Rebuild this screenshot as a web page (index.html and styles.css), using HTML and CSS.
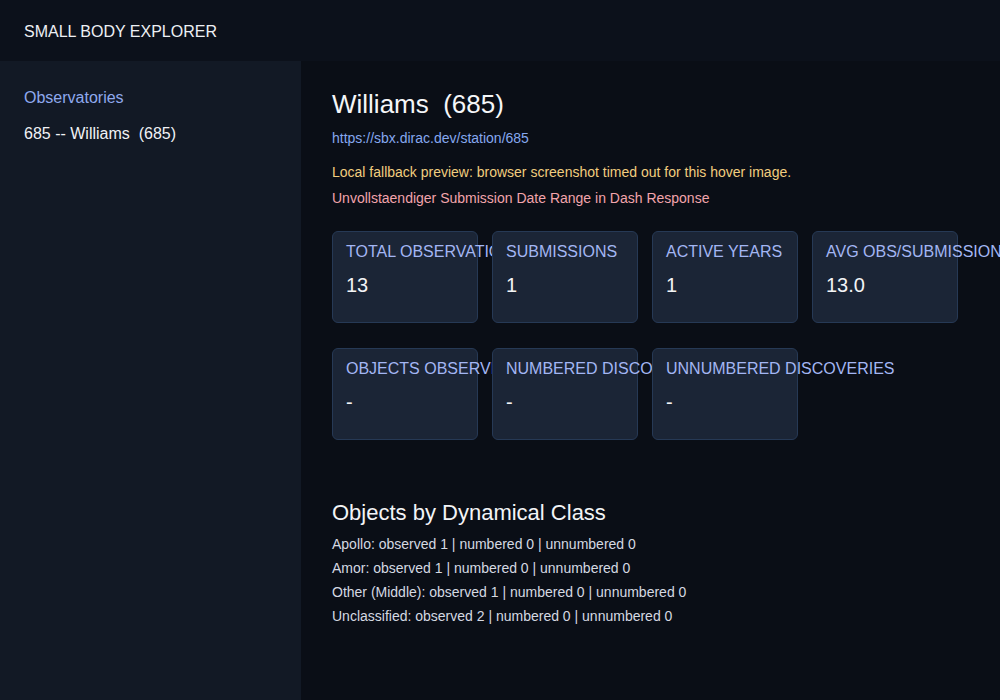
FILE: index.html
```html
<!DOCTYPE html>
<html lang="en">
<head>
    <meta charset="UTF-8">
    <meta name="viewport" content="width=device-width, initial-scale=1.0">
    <title>Small Body Explorer</title>
    <link rel="stylesheet" href="styles.css">
</head>
<body>
    <div class="header">
        <span class="brand">SMALL BODY EXPLORER</span>
    </div>

    <div class="layout">
        <div class="sidebar">
            <div class="side-title">Observatories</div>
            <div class="side-item">685 -- Williams  (685)</div>
        </div>

        <div class="main">
            <h1 class="station-name">Williams  (685)</h1>
            <a class="station-link" href="#">https://sbx.dirac.dev/station/685</a>
            <p class="notice">Local fallback preview: browser screenshot timed out for this hover image.</p>
            <p class="error">Unvollstaendiger Submission Date Range in Dash Response</p>

            <div class="cards">
                <div class="card"><div class="card-label">Total Observations</div><div class="card-value">13</div></div>
                <div class="card"><div class="card-label">Submissions</div><div class="card-value">1</div></div>
                <div class="card"><div class="card-label">Active Years</div><div class="card-value">1</div></div>
                <div class="card"><div class="card-label">Avg Obs/Submission</div><div class="card-value">13.0</div></div>
            </div>
            <div class="cards">
                <div class="card"><div class="card-label">Objects Observed</div><div class="card-value">-</div></div>
                <div class="card"><div class="card-label">Numbered Discoveries</div><div class="card-value">-</div></div>
                <div class="card"><div class="card-label">Unnumbered Discoveries</div><div class="card-value">-</div></div>
            </div>

            <h2 class="section-title">Objects by Dynamical Class</h2>
            <div class="class-list">
                <div>Apollo: observed 1 | numbered 0 | unnumbered 0</div>
                <div>Amor: observed 1 | numbered 0 | unnumbered 0</div>
                <div>Other (Middle): observed 1 | numbered 0 | unnumbered 0</div>
                <div>Unclassified: observed 2 | numbered 0 | unnumbered 0</div>
            </div>
        </div>
    </div>
</body>
</html>
```

FILE: styles.css
```css
body {
    margin: 0;
    font-family: "Liberation Sans", Arial, sans-serif;
    background-color: #0a0e16;
    color: #e6e9ef;
    overflow: hidden;
}
.header {
    height: 61px;
    background-color: #0c111b;
    padding: 0 24px;
    display: flex;
    align-items: center;
    box-sizing: border-box;
}
.brand {
    font-size: 16px;
    color: #eef0f4;
    padding-top: 2px;
}
.layout {
    display: flex;
    height: 639px;
}
.sidebar {
    width: 301px;
    background-color: #121925;
    padding: 28px 24px;
    box-sizing: border-box;
}
.side-title {
    font-size: 16px;
    color: #8fa9ee;
    margin-bottom: 18px;
}
.side-item {
    font-size: 16px;
    color: #f1f2f5;
    white-space: pre;
}
.main {
    flex: 1;
    padding: 28px 31px;
}
.station-name {
    margin: 0;
    font-size: 26px;
    font-weight: normal;
    color: #f5f6f8;
    white-space: pre;
}
.station-link {
    display: block;
    margin-top: 10px;
    font-size: 14px;
    color: #86a8ef;
    text-decoration: none;
}
.notice {
    margin: 18px 0 0;
    font-size: 14px;
    color: #f1cd7f;
}
.error {
    margin: 10px 0 0;
    font-size: 14px;
    color: #f2a4ac;
}
.cards {
    display: flex;
    gap: 14px;
    margin-top: 25px;
}
.cards + .cards {
    margin-top: 25px;
}
.card {
    width: 146px;
    height: 92px;
    box-sizing: border-box;
    background-color: #1b2536;
    border: 1px solid #263955;
    border-radius: 6px;
    padding: 10px 13px;
    white-space: nowrap;
}
.card-label {
    font-size: 16px;
    text-transform: uppercase;
    color: #a3b6f3;
    line-height: 19px;
}
.card-value {
    margin-top: 13px;
    font-size: 20px;
    color: #f3f4f6;
}
.section-title {
    margin: 60px 0 0;
    font-size: 22px;
    font-weight: normal;
    color: #f3f4f6;
}
.class-list {
    margin-top: 6px;
    font-size: 14px;
    line-height: 24px;
    color: #d5d9e2;
}
```
